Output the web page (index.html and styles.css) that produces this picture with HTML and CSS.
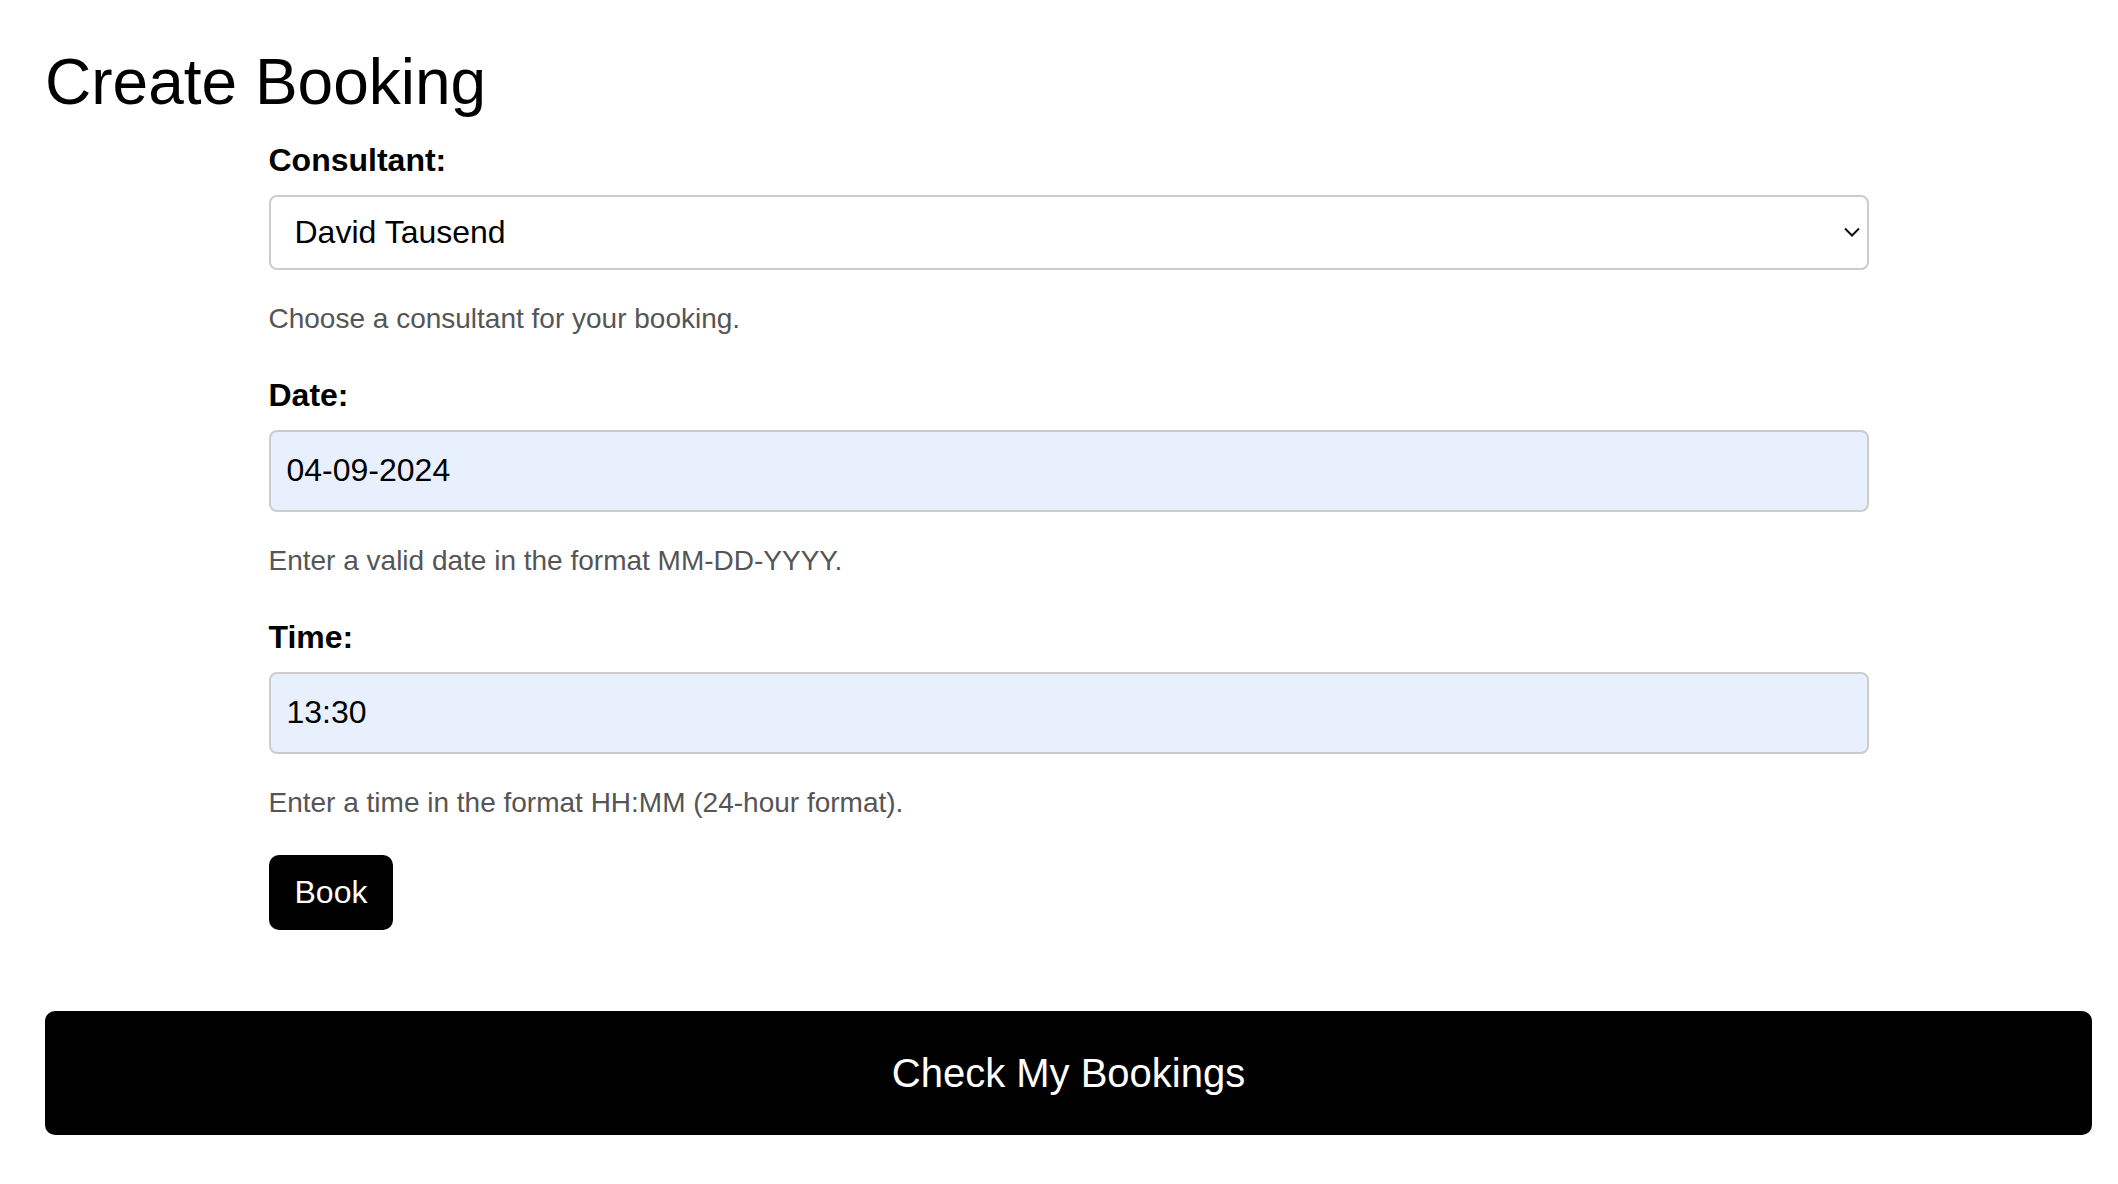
FILE: index.html
```html
<!DOCTYPE html>
<html lang="en">
<head>
<meta charset="utf-8">
<title>Create Booking</title>
<link rel="stylesheet" href="styles.css">
</head>
<body>
<div class="page">
  <h1 class="title">Create Booking</h1>
  <form class="booking-form">
    <div class="group">
      <label class="label" for="consultant">Consultant:</label>
      <div class="select-wrap">
        <select id="consultant" class="select">
          <option>David Tausend</option>
        </select>
        <svg class="chevron" width="16" height="10" viewBox="0 0 16 10" aria-hidden="true">
          <path d="M1 1.5 L8 8.5 L15 1.5" fill="none" stroke="#111" stroke-width="2"/>
        </svg>
      </div>
      <p class="help">Choose a consultant for your booking.</p>
    </div>
    <div class="group">
      <label class="label" for="date">Date:</label>
      <input id="date" class="input" type="text" value="04-09-2024">
      <p class="help">Enter a valid date in the format MM-DD-YYYY.</p>
    </div>
    <div class="group">
      <label class="label" for="time">Time:</label>
      <input id="time" class="input" type="text" value="13:30">
      <p class="help">Enter a time in the format HH:MM (24-hour format).</p>
    </div>
    <button type="button" class="book-btn">Book</button>
  </form>
  <button type="button" class="check-btn">Check My Bookings</button>
</div>
</body>
</html>
```
FILE: styles.css
```css
html, body {
  margin: 0;
  padding: 0;
  background: #fff;
}
body {
  font-family: "Liberation Sans", Arial, sans-serif;
  color: #000;
}
.page {
  padding: 45px 26px 0 45px;
}
.title {
  margin: 0 0 23px;
  font-size: 64px;
  line-height: 74px;
  font-weight: normal;
}
.booking-form {
  max-width: 1600px;
  margin: 0 auto;
}
.group {
  margin-bottom: 42px;
}
.label {
  display: block;
  font-size: 32px;
  line-height: 36.8px;
  font-weight: bold;
  margin-bottom: 16px;
}
.select-wrap {
  position: relative;
}
.select {
  display: block;
  width: 100%;
  box-sizing: border-box;
  height: 75px;
  padding: 0 40px 0 24px;
  border: 2px solid #cccccc;
  border-radius: 8px;
  background: #fff;
  font-family: "Liberation Sans", Arial, sans-serif;
  font-size: 32px;
  color: #000;
  appearance: none;
  -webkit-appearance: none;
  outline: none;
}
.chevron {
  position: absolute;
  right: 9px;
  top: 50%;
  transform: translateY(-50%);
  pointer-events: none;
}
.input {
  display: block;
  width: 100%;
  box-sizing: border-box;
  height: 82px;
  padding: 0 16px;
  border: 2px solid #cccccc;
  border-radius: 8px;
  background: #e8f0fe;
  font-family: "Liberation Sans", Arial, sans-serif;
  font-size: 32px;
  color: #000;
  outline: none;
}
.help {
  margin: 33px 0 0;
  font-size: 28px;
  line-height: 32.2px;
  color: #555;
}
.book-btn {
  display: block;
  margin: -6px 0 0;
  padding: 19px 26px;
  border: none;
  border-radius: 10px;
  background: #000;
  color: #fff;
  font-family: "Liberation Sans", Arial, sans-serif;
  font-size: 32px;
  line-height: 37px;
  cursor: pointer;
}
.check-btn {
  display: block;
  width: 100%;
  height: 124px;
  margin-top: 81px;
  border: none;
  border-radius: 10px;
  background: #000;
  color: #fff;
  font-family: "Liberation Sans", Arial, sans-serif;
  font-size: 40px;
  cursor: pointer;
}
```
